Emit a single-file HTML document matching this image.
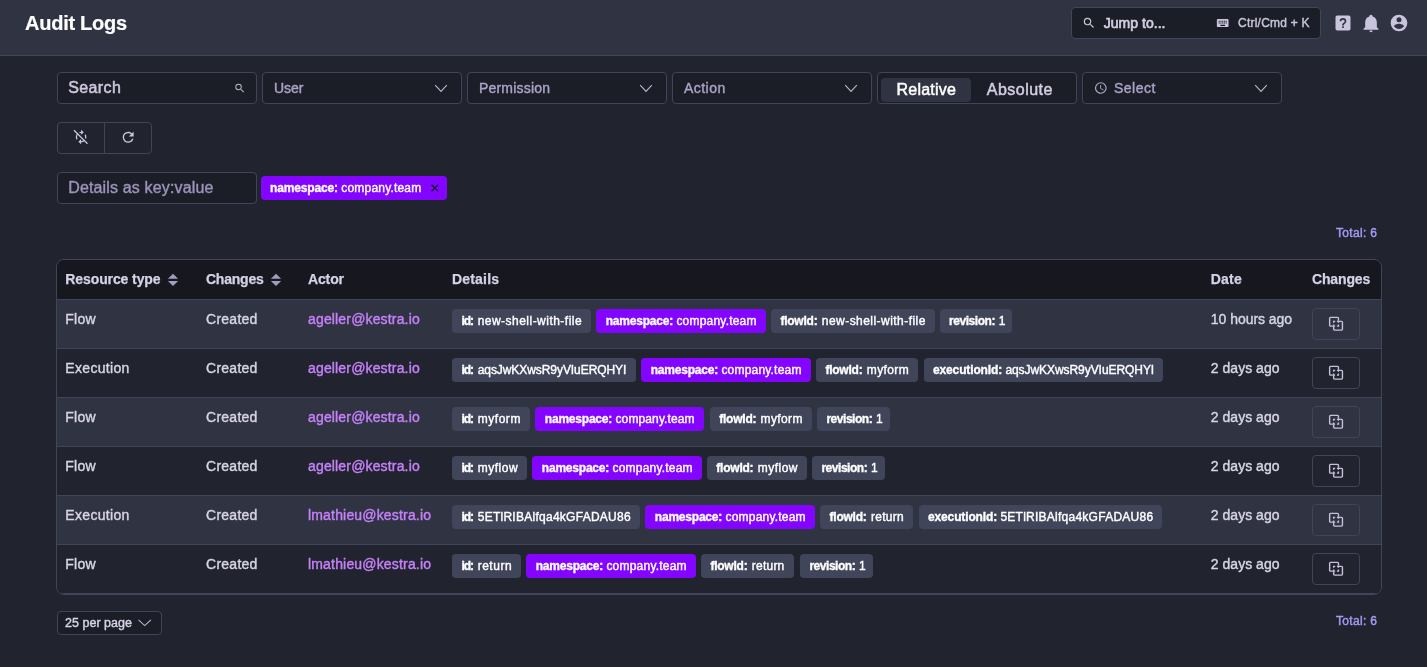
<!DOCTYPE html>
<html lang="en">
<head>
<meta charset="utf-8">
<title>Audit Logs</title>
<style>
*{box-sizing:border-box;margin:0;padding:0}
html,body{width:1427px;height:667px;overflow:hidden}
body{background:#21242e;color:#e3e3ea;font-family:"Liberation Sans",sans-serif;font-size:14px;position:relative}
#wrap{position:absolute;left:0;top:0;width:1427px;height:667px;will-change:transform}
.abs{position:absolute}
.t{position:absolute;white-space:nowrap;line-height:1;-webkit-text-stroke:0.4px currentColor}
.t b{-webkit-text-stroke:0}
.t b{font-weight:700}
.md{-webkit-text-stroke:0.5px currentColor}
.md2{-webkit-text-stroke:0.65px currentColor}
svg{position:absolute;display:block;overflow:visible}
#top{left:0;top:0;width:1427px;height:56px;background:#2f3342;border-bottom:1px solid #404559}
#jump{left:1071px;top:7px;width:250px;height:32px;background:#1c1e27;border:1px solid #404559;border-radius:4px}
.box{position:absolute;height:32px;background:#1c1e27;border:1px solid #404559;border-radius:4px}
.pill{position:absolute;left:881px;top:78px;width:90px;height:24px;background:#2f3342;border-radius:4px}
.bbtn{position:absolute;top:122px;height:32px;background:#21242e;border:1px solid #404559}
.ftag{position:absolute;left:261px;top:176px;width:186px;height:24px;border-radius:4px;background:#8405ff}
#tbl{left:56px;top:259px;width:1326px;height:336px;border:1px solid #404559;border-radius:8px;overflow:hidden;background:#21242e}
#thead{left:0;top:0;width:1324px;height:39px;background:#17181f}
.row{position:absolute;left:0;width:1324px;height:49px;border-top:1px solid #404559}
.row.odd{background:#2f3342}
.row.even{background:#21242e}
.tag{position:absolute;height:24px;border-radius:4px;background:#404559}
.tag.p{background:#8405ff}
.cbtn{position:absolute;left:1312px;width:48px;height:32px;border:1px solid #404559;border-radius:4px}
.pp{position:absolute;left:57px;top:611px;width:105px;height:24px;background:#1c1e27;border:1px solid #404559;border-radius:4px}
</style>
</head>
<body>
<div id="wrap">
<div id="top" class="abs"></div>
<div id="jump" class="abs"></div>
<!-- topbar icons -->
<svg style="left:1082px;top:16px" width="14" height="14" viewBox="0 0 24 24" fill="#cac5dc"><path d="M9.5,3A6.5,6.5 0 0,1 16,9.5C16,11.11 15.41,12.59 14.44,13.73L14.71,14H15.5L20.5,19L19,20.5L14,15.5V14.71L13.73,14.44C12.59,15.41 11.11,16 9.5,16A6.5,6.5 0 0,1 3,9.5A6.5,6.5 0 0,1 9.5,3M9.5,5C7,5 5,7 5,9.5C5,12 7,14 9.5,14C12,14 14,12 14,9.5C14,7 12,5 9.5,5Z"/></svg>
<svg style="left:1215px;top:16px" width="14" height="14" viewBox="-1.2 0 24 24" fill="#cac5dc"><path d="M19,10H17V8H19M19,13H17V11H19M16,10H14V8H16M16,13H14V11H16M16,17H8V15H16M7,10H5V8H7M7,13H5V11H7M8,11H10V13H8M8,8H10V10H8M11,11H13V13H11M11,8H13V10H11M20,5H4C2.89,5 2,5.89 2,7V17A2,2 0 0,0 4,19H20A2,2 0 0,0 22,17V7C22,5.89 21.1,5 20,5Z"/></svg>
<svg style="left:1333px;top:13px" width="20" height="20" viewBox="0 0 24 24" fill="#cac5dc"><path d="M11,18H13V16H11V18M12,6A4,4 0 0,0 8,10H10A2,2 0 0,1 12,8A2,2 0 0,1 14,10C14,12 11,11.75 11,15H13C13,12.75 16,12.5 16,10A4,4 0 0,0 12,6M5,3H19A2,2 0 0,1 21,5V19A2,2 0 0,1 19,21H5A2,2 0 0,1 3,19V5A2,2 0 0,1 5,3Z"/></svg>
<svg style="left:1361px;top:13px" width="20" height="20" viewBox="0 0 24 24" fill="#cac5dc"><path d="M21,19V20H3V19L5,17V11C5,7.9 7.03,5.17 10,4.29C10,4.19 10,4.1 10,4A2,2 0 0,1 12,2A2,2 0 0,1 14,4C14,4.1 14,4.19 14,4.29C16.97,5.17 19,7.9 19,11V17L21,19M14,21A2,2 0 0,1 12,23A2,2 0 0,1 10,21"/></svg>
<svg style="left:1389px;top:13px" width="20" height="20" viewBox="0 0 24 24" fill="#cac5dc"><path d="M12,19.2C9.5,19.2 7.29,17.92 6,16C6.03,14 10,12.9 12,12.9C14,12.9 17.97,14 18,16C16.71,17.92 14.5,19.2 12,19.2M12,5A3,3 0 0,1 15,8A3,3 0 0,1 12,11A3,3 0 0,1 9,8A3,3 0 0,1 12,5M12,2A10,10 0 0,0 2,12A10,10 0 0,0 12,22A10,10 0 0,0 22,12C22,6.47 17.5,2 12,2Z"/></svg>

<!-- filter row -->
<div class="box" style="left:57px;top:72px;width:200px"></div>
<div class="box" style="left:262px;top:72px;width:200px"></div>
<div class="box" style="left:467px;top:72px;width:200px"></div>
<div class="box" style="left:672px;top:72px;width:200px"></div>
<div class="box" style="left:877px;top:72px;width:200px"></div>
<div class="pill"></div>
<div class="box" style="left:1082px;top:72px;width:200px"></div>
<svg style="left:233px;top:82px" width="12" height="12" viewBox="-1.6 -0.4 24 24" fill="#b9b5cf"><path d="M9.5,3A6.5,6.5 0 0,1 16,9.5C16,11.11 15.41,12.59 14.44,13.73L14.71,14H15.5L20.5,19L19,20.5L14,15.5V14.71L13.73,14.44C12.59,15.41 11.11,16 9.5,16A6.5,6.5 0 0,1 3,9.5A6.5,6.5 0 0,1 9.5,3M9.5,5C7,5 5,7 5,9.5C5,12 7,14 9.5,14C12,14 14,12 14,9.5C14,7 12,5 9.5,5Z"/></svg>
<svg class="chev" style="left:434px;top:84px" width="14" height="9" viewBox="0 0 14 9" fill="none" stroke="#b9b5cf" stroke-width="1.15"><polyline points="1.2,1.2 7,7.3 12.8,1.2"/></svg>
<svg class="chev" style="left:639px;top:84px" width="14" height="9" viewBox="0 0 14 9" fill="none" stroke="#b9b5cf" stroke-width="1.15"><polyline points="1.2,1.2 7,7.3 12.8,1.2"/></svg>
<svg class="chev" style="left:844px;top:84px" width="14" height="9" viewBox="0 0 14 9" fill="none" stroke="#b9b5cf" stroke-width="1.15"><polyline points="1.2,1.2 7,7.3 12.8,1.2"/></svg>
<svg class="chev" style="left:1254px;top:84px" width="14" height="9" viewBox="0 0 14 9" fill="none" stroke="#b9b5cf" stroke-width="1.15"><polyline points="1.2,1.2 7,7.3 12.8,1.2"/></svg>
<svg style="left:1093px;top:81px" width="14" height="14" viewBox="-1.371 0 24 24" fill="#aeaac6"><path d="M12,20A8,8 0 0,0 20,12A8,8 0 0,0 12,4A8,8 0 0,0 4,12A8,8 0 0,0 12,20M12,2A10,10 0 0,1 22,12A10,10 0 0,1 12,22C6.47,22 2,17.5 2,12A10,10 0 0,1 12,2M12.5,7V12.25L17,14.92L16.25,16.15L11,13V7H12.5Z"/></svg>

<!-- buttons row -->
<div class="bbtn" style="left:57px;width:48px;border-radius:4px 0 0 4px"></div>
<div class="bbtn" style="left:104px;width:48px;border-radius:0 4px 4px 0"></div>
<svg style="left:73px;top:129px" width="16" height="16" viewBox="-0.15 0 24 24" fill="#cac5dc"><path d="M12,6V9L16,5L12,1V4A8,8 0 0,0 4,12C4,13.57 4.46,15.03 5.24,16.26L6.7,14.8C6.25,13.97 6,13 6,12A6,6 0 0,1 12,6M18.76,7.74L17.3,9.2C17.74,10.04 18,11 18,12A6,6 0 0,1 12,18V15L8,19L12,23V20A8,8 0 0,0 20,12C20,10.43 19.54,8.97 18.76,7.74Z"/><path d="M3.2,0.8L23,20.6" stroke="#21242e" stroke-width="2.6" fill="none"/><path d="M1.4,1.9L21.6,22.1" stroke="#cac5dc" stroke-width="1.9" fill="none"/></svg>
<svg style="left:119px;top:129px" width="16.5" height="16.5" viewBox="-1.309 0 24 24" fill="#cac5dc"><path d="M17.65,6.35C16.2,4.9 14.21,4 12,4A8,8 0 0,0 4,12A8,8 0 0,0 12,20C15.73,20 18.84,17.45 19.73,14H17.65C16.83,16.33 14.61,18 12,18A6,6 0 0,1 6,12A6,6 0 0,1 12,6C13.66,6 15.14,6.69 16.22,7.78L13,11H20V4L17.65,6.35Z"/></svg>

<!-- details row -->
<div class="box" style="left:57px;top:172px;width:200px"></div>
<div class="ftag"></div>
<svg style="left:428px;top:182px" width="12" height="12" viewBox="-1.6 0 24 24" fill="#15041f" stroke="#15041f" stroke-width="0.6"><path d="M19,6.41L17.59,5L12,10.59L6.41,5L5,6.41L10.59,12L5,17.59L6.41,19L12,13.41L17.59,19L19,17.59L13.41,12L19,6.41Z"/></svg>

<!-- table -->
<div id="tbl" class="abs">
  <div id="thead" class="abs"></div>
  <div class="row odd" style="top:39px"></div>
  <div class="row even" style="top:88px"></div>
  <div class="row odd" style="top:137px"></div>
  <div class="row even" style="top:186px"></div>
  <div class="row odd" style="top:235px"></div>
  <div class="row even" style="top:284px;height:50px;border-bottom:1px solid #404559"></div>
</div>
<!-- sort carets -->
<svg style="left:167px;top:273px" width="10.6" height="13" viewBox="-0.7264 -0.8 11 13" preserveAspectRatio="none" fill="#a29dbd"><path d="M5.5,0L10.8,5.0H0.2Z"/><path d="M5.5,12.3L10.8,7.3H0.2Z"/></svg>
<svg style="left:270px;top:273px" width="10.6" height="13" viewBox="-0.7264 -0.8 11 13" preserveAspectRatio="none" fill="#a29dbd"><path d="M5.5,0L10.8,5.0H0.2Z"/><path d="M5.5,12.3L10.8,7.3H0.2Z"/></svg>

<div class="pp"></div>
<svg class="chev" style="left:137px;top:619px" width="14" height="8" viewBox="-0.7 0 14 8" fill="none" stroke="#b9b5cf" stroke-width="1.1"><polyline points="0.8,0.8 7,6.6 13.2,0.8"/></svg>
<div class="cbtn" style="top:308px"></div>
<svg style="left:1326px;top:314px" width="19.2" height="19.2" viewBox="-0.5625 -0.1875 24 24" fill="none" stroke="#c6c1da" stroke-width="1.75" stroke-linejoin="round"><path d="M15,8.4V5a1,1 0 0 0-1-1H5a1,1 0 0 0-1,1v9a1,1 0 0 0 1,1h3.4"/><path d="M15.6,9h3.4a1,1 0 0 1 1,1v9a1,1 0 0 1-1,1h-9a1,1 0 0 1-1-1v-3.4"/><path d="M9,10.9V9h1.9M13.1,9H15v1.9M9,13.1V15h1.9M13.1,15H15v-1.9" stroke-linejoin="miter" stroke-width="1.7"/></svg>
<div class="cbtn" style="top:357px"></div>
<svg style="left:1326px;top:363px" width="19.2" height="19.2" viewBox="-0.5625 -0.1875 24 24" fill="none" stroke="#c6c1da" stroke-width="1.75" stroke-linejoin="round"><path d="M15,8.4V5a1,1 0 0 0-1-1H5a1,1 0 0 0-1,1v9a1,1 0 0 0 1,1h3.4"/><path d="M15.6,9h3.4a1,1 0 0 1 1,1v9a1,1 0 0 1-1,1h-9a1,1 0 0 1-1-1v-3.4"/><path d="M9,10.9V9h1.9M13.1,9H15v1.9M9,13.1V15h1.9M13.1,15H15v-1.9" stroke-linejoin="miter" stroke-width="1.7"/></svg>
<div class="cbtn" style="top:406px"></div>
<svg style="left:1326px;top:412px" width="19.2" height="19.2" viewBox="-0.5625 -0.1875 24 24" fill="none" stroke="#c6c1da" stroke-width="1.75" stroke-linejoin="round"><path d="M15,8.4V5a1,1 0 0 0-1-1H5a1,1 0 0 0-1,1v9a1,1 0 0 0 1,1h3.4"/><path d="M15.6,9h3.4a1,1 0 0 1 1,1v9a1,1 0 0 1-1,1h-9a1,1 0 0 1-1-1v-3.4"/><path d="M9,10.9V9h1.9M13.1,9H15v1.9M9,13.1V15h1.9M13.1,15H15v-1.9" stroke-linejoin="miter" stroke-width="1.7"/></svg>
<div class="cbtn" style="top:455px"></div>
<svg style="left:1326px;top:461px" width="19.2" height="19.2" viewBox="-0.5625 -0.1875 24 24" fill="none" stroke="#c6c1da" stroke-width="1.75" stroke-linejoin="round"><path d="M15,8.4V5a1,1 0 0 0-1-1H5a1,1 0 0 0-1,1v9a1,1 0 0 0 1,1h3.4"/><path d="M15.6,9h3.4a1,1 0 0 1 1,1v9a1,1 0 0 1-1,1h-9a1,1 0 0 1-1-1v-3.4"/><path d="M9,10.9V9h1.9M13.1,9H15v1.9M9,13.1V15h1.9M13.1,15H15v-1.9" stroke-linejoin="miter" stroke-width="1.7"/></svg>
<div class="cbtn" style="top:504px"></div>
<svg style="left:1326px;top:510px" width="19.2" height="19.2" viewBox="-0.5625 -0.1875 24 24" fill="none" stroke="#c6c1da" stroke-width="1.75" stroke-linejoin="round"><path d="M15,8.4V5a1,1 0 0 0-1-1H5a1,1 0 0 0-1,1v9a1,1 0 0 0 1,1h3.4"/><path d="M15.6,9h3.4a1,1 0 0 1 1,1v9a1,1 0 0 1-1,1h-9a1,1 0 0 1-1-1v-3.4"/><path d="M9,10.9V9h1.9M13.1,9H15v1.9M9,13.1V15h1.9M13.1,15H15v-1.9" stroke-linejoin="miter" stroke-width="1.7"/></svg>
<div class="cbtn" style="top:553px"></div>
<svg style="left:1326px;top:559px" width="19.2" height="19.2" viewBox="-0.5625 -0.1875 24 24" fill="none" stroke="#c6c1da" stroke-width="1.75" stroke-linejoin="round"><path d="M15,8.4V5a1,1 0 0 0-1-1H5a1,1 0 0 0-1,1v9a1,1 0 0 0 1,1h3.4"/><path d="M15.6,9h3.4a1,1 0 0 1 1,1v9a1,1 0 0 1-1,1h-9a1,1 0 0 1-1-1v-3.4"/><path d="M9,10.9V9h1.9M13.1,9H15v1.9M9,13.1V15h1.9M13.1,15H15v-1.9" stroke-linejoin="miter" stroke-width="1.7"/></svg>

<div class="tag" style="left:452.0px;top:309px;width:138.9px"></div>
<div class="tag p" style="left:595.9px;top:309px;width:169.9px"></div>
<div class="tag" style="left:770.9px;top:309px;width:163.8px"></div>
<div class="tag" style="left:939.7px;top:309px;width:72.8px"></div>
<div class="tag" style="left:452.0px;top:358px;width:183.7px"></div>
<div class="tag p" style="left:640.9px;top:358px;width:169.8px"></div>
<div class="tag" style="left:815.9px;top:358px;width:102.1px"></div>
<div class="tag" style="left:923.8px;top:358px;width:239.7px"></div>
<div class="tag" style="left:452.0px;top:407px;width:77.7px"></div>
<div class="tag p" style="left:535.0px;top:407px;width:168.9px"></div>
<div class="tag" style="left:709.7px;top:407px;width:102.1px"></div>
<div class="tag" style="left:817.0px;top:407px;width:73.0px"></div>
<div class="tag" style="left:452.0px;top:456px;width:75.0px"></div>
<div class="tag p" style="left:532.0px;top:456px;width:169.8px"></div>
<div class="tag" style="left:706.8px;top:456px;width:100.0px"></div>
<div class="tag" style="left:812.0px;top:456px;width:73.0px"></div>
<div class="tag" style="left:452.0px;top:505px;width:188.0px"></div>
<div class="tag p" style="left:645.0px;top:505px;width:169.8px"></div>
<div class="tag" style="left:820.0px;top:505px;width:93.0px"></div>
<div class="tag" style="left:918.8px;top:505px;width:243.6px"></div>
<div class="tag" style="left:452.0px;top:554px;width:68.9px"></div>
<div class="tag p" style="left:525.9px;top:554px;width:170.0px"></div>
<div class="tag" style="left:700.9px;top:554px;width:92.7px"></div>
<div class="tag" style="left:800.0px;top:554px;width:72.6px"></div>
<div class="t" id="t0" style="left:25.10px;top:12.97px;font-size:20px;font-weight:700;color:#ffffff;letter-spacing:-0.271px;-webkit-text-stroke:0.2px currentColor">Audit Logs</div>
<div class="t md2" id="t1" style="left:1103.70px;top:15.65px;font-size:14px;font-weight:400;color:#d3cfe2;letter-spacing:0.037px">Jump to...</div>
<div class="t" id="t2" style="left:1238.00px;top:16.84px;font-size:12px;font-weight:400;color:#c9c5dc;letter-spacing:0.226px">Ctrl/Cmd + K</div>
<div class="t md" id="t3" style="left:68.20px;top:79.76px;font-size:16px;font-weight:400;color:#cdc8de;letter-spacing:0.379px">Search</div>
<div class="t" id="t4" style="left:274.00px;top:81.15px;font-size:14px;font-weight:400;color:#aaa3c8;letter-spacing:-0.021px">User</div>
<div class="t" id="t5" style="left:479.00px;top:81.15px;font-size:14px;font-weight:400;color:#aaa3c8;letter-spacing:0.194px">Permission</div>
<div class="t" id="t6" style="left:684.00px;top:81.15px;font-size:14px;font-weight:400;color:#aaa3c8;letter-spacing:0.456px">Action</div>
<div class="t md" id="t7" style="left:896.50px;top:82.46px;font-size:16px;font-weight:400;color:#ffffff;letter-spacing:0.241px">Relative</div>
<div class="t md" id="t8" style="left:986.80px;top:82.46px;font-size:16px;font-weight:400;color:#d3cde3;letter-spacing:0.476px">Absolute</div>
<div class="t" id="t9" style="left:1114.00px;top:81.15px;font-size:14px;font-weight:400;color:#aaa3c8;letter-spacing:0.476px">Select</div>
<div class="t" id="t10" style="left:68.20px;top:179.76px;font-size:16px;font-weight:400;color:#9b93bb;letter-spacing:0.153px">Details as key:value</div>
<div class="t" id="t11" style="left:270.00px;top:182.04px;font-size:12px;font-weight:700;color:#ffffff;letter-spacing:-0.142px;-webkit-text-stroke:0.35px currentColor">namespace:</div>
<div class="t" id="t12" style="left:341.30px;top:182.04px;font-size:12px;font-weight:400;color:#ffffff;letter-spacing:0.190px">company.team</div>
<div class="t" id="t13" style="left:1336.00px;top:226.64px;font-size:12px;font-weight:400;color:#a59cf7;letter-spacing:0.328px">Total: 6</div>
<div class="t" id="t14" style="left:1336.00px;top:615.14px;font-size:12px;font-weight:400;color:#a59cf7;letter-spacing:0.328px">Total: 6</div>
<div class="t" id="t15" style="left:65.10px;top:617.32px;font-size:12.5px;font-weight:400;color:#d7d5e4;letter-spacing:0.007px">25 per page</div>
<div class="t" id="t16" style="left:65.30px;top:271.55px;font-size:14px;font-weight:700;color:#d6d2e6;letter-spacing:-0.099px;-webkit-text-stroke:0.25px currentColor">Resource type</div>
<div class="t" id="t17" style="left:205.90px;top:271.55px;font-size:14px;font-weight:700;color:#d6d2e6;letter-spacing:-0.204px;-webkit-text-stroke:0.25px currentColor">Changes</div>
<div class="t" id="t18" style="left:308.00px;top:271.55px;font-size:14px;font-weight:700;color:#d6d2e6;letter-spacing:-0.141px;-webkit-text-stroke:0.25px currentColor">Actor</div>
<div class="t" id="t19" style="left:452.00px;top:271.55px;font-size:14px;font-weight:700;color:#d6d2e6;letter-spacing:0.180px;-webkit-text-stroke:0.25px currentColor">Details</div>
<div class="t" id="t20" style="left:1210.80px;top:271.55px;font-size:14px;font-weight:700;color:#d6d2e6;letter-spacing:0.214px;-webkit-text-stroke:0.25px currentColor">Date</div>
<div class="t" id="t21" style="left:1312.00px;top:271.55px;font-size:14px;font-weight:700;color:#d6d2e6;letter-spacing:-0.154px;-webkit-text-stroke:0.25px currentColor">Changes</div>
<div class="t" id="t22" style="left:65.30px;top:312.15px;font-size:14px;font-weight:400;color:#d7d5e4;letter-spacing:0.246px">Flow</div>
<div class="t" id="t23" style="left:206.00px;top:312.15px;font-size:14px;font-weight:400;color:#d7d5e4;letter-spacing:0.265px">Created</div>
<div class="t" id="t24" style="left:308.00px;top:312.15px;font-size:14px;font-weight:400;color:#c680fa;letter-spacing:0.159px">ageller@kestra.io</div>
<div class="t" id="t25" style="left:1210.80px;top:312.15px;font-size:14px;font-weight:400;color:#d7d5e4;letter-spacing:-0.039px">10 hours ago</div>
<div class="t" id="t26" style="left:65.30px;top:361.15px;font-size:14px;font-weight:400;color:#d7d5e4;letter-spacing:0.327px">Execution</div>
<div class="t" id="t27" style="left:206.00px;top:361.15px;font-size:14px;font-weight:400;color:#d7d5e4;letter-spacing:0.265px">Created</div>
<div class="t" id="t28" style="left:308.00px;top:361.15px;font-size:14px;font-weight:400;color:#c680fa;letter-spacing:0.159px">ageller@kestra.io</div>
<div class="t" id="t29" style="left:1210.80px;top:361.15px;font-size:14px;font-weight:400;color:#d7d5e4;letter-spacing:0.022px">2 days ago</div>
<div class="t" id="t30" style="left:65.30px;top:410.15px;font-size:14px;font-weight:400;color:#d7d5e4;letter-spacing:0.246px">Flow</div>
<div class="t" id="t31" style="left:206.00px;top:410.15px;font-size:14px;font-weight:400;color:#d7d5e4;letter-spacing:0.265px">Created</div>
<div class="t" id="t32" style="left:308.00px;top:410.15px;font-size:14px;font-weight:400;color:#c680fa;letter-spacing:0.159px">ageller@kestra.io</div>
<div class="t" id="t33" style="left:1210.80px;top:410.15px;font-size:14px;font-weight:400;color:#d7d5e4;letter-spacing:0.022px">2 days ago</div>
<div class="t" id="t34" style="left:65.30px;top:459.15px;font-size:14px;font-weight:400;color:#d7d5e4;letter-spacing:0.246px">Flow</div>
<div class="t" id="t35" style="left:206.00px;top:459.15px;font-size:14px;font-weight:400;color:#d7d5e4;letter-spacing:0.265px">Created</div>
<div class="t" id="t36" style="left:308.00px;top:459.15px;font-size:14px;font-weight:400;color:#c680fa;letter-spacing:0.159px">ageller@kestra.io</div>
<div class="t" id="t37" style="left:1210.80px;top:459.15px;font-size:14px;font-weight:400;color:#d7d5e4;letter-spacing:0.022px">2 days ago</div>
<div class="t" id="t38" style="left:65.30px;top:508.15px;font-size:14px;font-weight:400;color:#d7d5e4;letter-spacing:0.327px">Execution</div>
<div class="t" id="t39" style="left:206.00px;top:508.15px;font-size:14px;font-weight:400;color:#d7d5e4;letter-spacing:0.265px">Created</div>
<div class="t" id="t40" style="left:308.00px;top:508.15px;font-size:14px;font-weight:400;color:#c680fa;letter-spacing:0.174px">lmathieu@kestra.io</div>
<div class="t" id="t41" style="left:1210.80px;top:508.15px;font-size:14px;font-weight:400;color:#d7d5e4;letter-spacing:0.022px">2 days ago</div>
<div class="t" id="t42" style="left:65.30px;top:557.15px;font-size:14px;font-weight:400;color:#d7d5e4;letter-spacing:0.246px">Flow</div>
<div class="t" id="t43" style="left:206.00px;top:557.15px;font-size:14px;font-weight:400;color:#d7d5e4;letter-spacing:0.265px">Created</div>
<div class="t" id="t44" style="left:308.00px;top:557.15px;font-size:14px;font-weight:400;color:#c680fa;letter-spacing:0.174px">lmathieu@kestra.io</div>
<div class="t" id="t45" style="left:1210.80px;top:557.15px;font-size:14px;font-weight:400;color:#d7d5e4;letter-spacing:0.022px">2 days ago</div>
<div class="t" id="t46" style="left:461.60px;top:314.74px;font-size:12px;font-weight:700;color:#ffffff;letter-spacing:-1.086px;-webkit-text-stroke:0.35px currentColor">id:</div>
<div class="t" id="t47" style="left:477.70px;top:314.74px;font-size:12px;font-weight:400;color:#ffffff;letter-spacing:0.474px">new-shell-with-file</div>
<div class="t" id="t48" style="left:605.70px;top:314.74px;font-size:12px;font-weight:700;color:#ffffff;letter-spacing:-0.208px;-webkit-text-stroke:0.35px currentColor">namespace:</div>
<div class="t" id="t49" style="left:676.40px;top:314.74px;font-size:12px;font-weight:400;color:#ffffff;letter-spacing:0.208px">company.team</div>
<div class="t" id="t50" style="left:780.40px;top:314.74px;font-size:12px;font-weight:700;color:#ffffff;letter-spacing:-0.226px;-webkit-text-stroke:0.35px currentColor">flowId:</div>
<div class="t" id="t51" style="left:821.80px;top:314.74px;font-size:12px;font-weight:400;color:#ffffff;letter-spacing:0.457px">new-shell-with-file</div>
<div class="t" id="t52" style="left:949.10px;top:314.74px;font-size:12px;font-weight:700;color:#ffffff;letter-spacing:-0.464px;-webkit-text-stroke:0.35px currentColor">revision:</div>
<div class="t" id="t53" style="left:998.70px;top:314.74px;font-size:12px;font-weight:400;color:#ffffff;letter-spacing:-1.888px">1</div>
<div class="t" id="t54" style="left:461.60px;top:363.74px;font-size:12px;font-weight:700;color:#ffffff;letter-spacing:-1.086px;-webkit-text-stroke:0.35px currentColor">id:</div>
<div class="t" id="t55" style="left:477.70px;top:363.74px;font-size:12px;font-weight:400;color:#ffffff;letter-spacing:-0.067px">aqsJwKXwsR9yVIuERQHYI</div>
<div class="t" id="t56" style="left:650.70px;top:363.74px;font-size:12px;font-weight:700;color:#ffffff;letter-spacing:-0.208px;-webkit-text-stroke:0.35px currentColor">namespace:</div>
<div class="t" id="t57" style="left:721.40px;top:363.74px;font-size:12px;font-weight:400;color:#ffffff;letter-spacing:0.199px">company.team</div>
<div class="t" id="t58" style="left:825.40px;top:363.74px;font-size:12px;font-weight:700;color:#ffffff;letter-spacing:-0.226px;-webkit-text-stroke:0.35px currentColor">flowId:</div>
<div class="t" id="t59" style="left:866.80px;top:363.74px;font-size:12px;font-weight:400;color:#ffffff;letter-spacing:0.380px">myform</div>
<div class="t" id="t60" style="left:933.00px;top:363.74px;font-size:12px;font-weight:700;color:#ffffff;letter-spacing:-0.135px;-webkit-text-stroke:0.35px currentColor">executionId:</div>
<div class="t" id="t61" style="left:1005.40px;top:363.74px;font-size:12px;font-weight:400;color:#ffffff;letter-spacing:-0.062px">aqsJwKXwsR9yVIuERQHYI</div>
<div class="t" id="t62" style="left:461.60px;top:412.74px;font-size:12px;font-weight:700;color:#ffffff;letter-spacing:-1.086px;-webkit-text-stroke:0.35px currentColor">id:</div>
<div class="t" id="t63" style="left:477.70px;top:412.74px;font-size:12px;font-weight:400;color:#ffffff;letter-spacing:0.540px">myform</div>
<div class="t" id="t64" style="left:544.80px;top:412.74px;font-size:12px;font-weight:700;color:#ffffff;letter-spacing:-0.208px;-webkit-text-stroke:0.35px currentColor">namespace:</div>
<div class="t" id="t65" style="left:615.50px;top:412.74px;font-size:12px;font-weight:400;color:#ffffff;letter-spacing:0.117px">company.team</div>
<div class="t" id="t66" style="left:719.20px;top:412.74px;font-size:12px;font-weight:700;color:#ffffff;letter-spacing:-0.226px;-webkit-text-stroke:0.35px currentColor">flowId:</div>
<div class="t" id="t67" style="left:760.60px;top:412.74px;font-size:12px;font-weight:400;color:#ffffff;letter-spacing:0.380px">myform</div>
<div class="t" id="t68" style="left:826.40px;top:412.74px;font-size:12px;font-weight:700;color:#ffffff;letter-spacing:-0.464px;-webkit-text-stroke:0.35px currentColor">revision:</div>
<div class="t" id="t69" style="left:876.00px;top:412.74px;font-size:12px;font-weight:400;color:#ffffff;letter-spacing:-1.688px">1</div>
<div class="t" id="t70" style="left:461.60px;top:461.74px;font-size:12px;font-weight:700;color:#ffffff;letter-spacing:-1.086px;-webkit-text-stroke:0.35px currentColor">id:</div>
<div class="t" id="t71" style="left:477.70px;top:461.74px;font-size:12px;font-weight:400;color:#ffffff;letter-spacing:0.531px">myflow</div>
<div class="t" id="t72" style="left:541.80px;top:461.74px;font-size:12px;font-weight:700;color:#ffffff;letter-spacing:-0.208px;-webkit-text-stroke:0.35px currentColor">namespace:</div>
<div class="t" id="t73" style="left:612.50px;top:461.74px;font-size:12px;font-weight:400;color:#ffffff;letter-spacing:0.199px">company.team</div>
<div class="t" id="t74" style="left:716.30px;top:461.74px;font-size:12px;font-weight:700;color:#ffffff;letter-spacing:-0.226px;-webkit-text-stroke:0.35px currentColor">flowId:</div>
<div class="t" id="t75" style="left:757.70px;top:461.74px;font-size:12px;font-weight:400;color:#ffffff;letter-spacing:0.491px">myflow</div>
<div class="t" id="t76" style="left:821.40px;top:461.74px;font-size:12px;font-weight:700;color:#ffffff;letter-spacing:-0.464px;-webkit-text-stroke:0.35px currentColor">revision:</div>
<div class="t" id="t77" style="left:871.00px;top:461.74px;font-size:12px;font-weight:400;color:#ffffff;letter-spacing:-1.688px">1</div>
<div class="t" id="t78" style="left:461.60px;top:510.74px;font-size:12px;font-weight:700;color:#ffffff;letter-spacing:-1.086px;-webkit-text-stroke:0.35px currentColor">id:</div>
<div class="t" id="t79" style="left:477.70px;top:510.74px;font-size:12px;font-weight:400;color:#ffffff;letter-spacing:0.266px">5ETlRIBAlfqa4kGFADAU86</div>
<div class="t" id="t80" style="left:654.80px;top:510.74px;font-size:12px;font-weight:700;color:#ffffff;letter-spacing:-0.208px;-webkit-text-stroke:0.35px currentColor">namespace:</div>
<div class="t" id="t81" style="left:725.50px;top:510.74px;font-size:12px;font-weight:400;color:#ffffff;letter-spacing:0.199px">company.team</div>
<div class="t" id="t82" style="left:829.50px;top:510.74px;font-size:12px;font-weight:700;color:#ffffff;letter-spacing:-0.226px;-webkit-text-stroke:0.35px currentColor">flowId:</div>
<div class="t" id="t83" style="left:870.90px;top:510.74px;font-size:12px;font-weight:400;color:#ffffff;letter-spacing:0.288px">return</div>
<div class="t" id="t84" style="left:928.00px;top:510.74px;font-size:12px;font-weight:700;color:#ffffff;letter-spacing:-0.135px;-webkit-text-stroke:0.35px currentColor">executionId:</div>
<div class="t" id="t85" style="left:1000.40px;top:510.74px;font-size:12px;font-weight:400;color:#ffffff;letter-spacing:0.252px">5ETlRIBAlfqa4kGFADAU86</div>
<div class="t" id="t86" style="left:461.60px;top:559.74px;font-size:12px;font-weight:700;color:#ffffff;letter-spacing:-1.086px;-webkit-text-stroke:0.35px currentColor">id:</div>
<div class="t" id="t87" style="left:477.70px;top:559.74px;font-size:12px;font-weight:400;color:#ffffff;letter-spacing:0.508px">return</div>
<div class="t" id="t88" style="left:535.70px;top:559.74px;font-size:12px;font-weight:700;color:#ffffff;letter-spacing:-0.208px;-webkit-text-stroke:0.35px currentColor">namespace:</div>
<div class="t" id="t89" style="left:606.40px;top:559.74px;font-size:12px;font-weight:400;color:#ffffff;letter-spacing:0.217px">company.team</div>
<div class="t" id="t90" style="left:710.40px;top:559.74px;font-size:12px;font-weight:700;color:#ffffff;letter-spacing:-0.226px;-webkit-text-stroke:0.35px currentColor">flowId:</div>
<div class="t" id="t91" style="left:751.80px;top:559.74px;font-size:12px;font-weight:400;color:#ffffff;letter-spacing:0.228px">return</div>
<div class="t" id="t92" style="left:809.40px;top:559.74px;font-size:12px;font-weight:700;color:#ffffff;letter-spacing:-0.464px;-webkit-text-stroke:0.35px currentColor">revision:</div>
<div class="t" id="t93" style="left:859.00px;top:559.74px;font-size:12px;font-weight:400;color:#ffffff;letter-spacing:-2.087px">1</div>
</div>
</body>
</html>
